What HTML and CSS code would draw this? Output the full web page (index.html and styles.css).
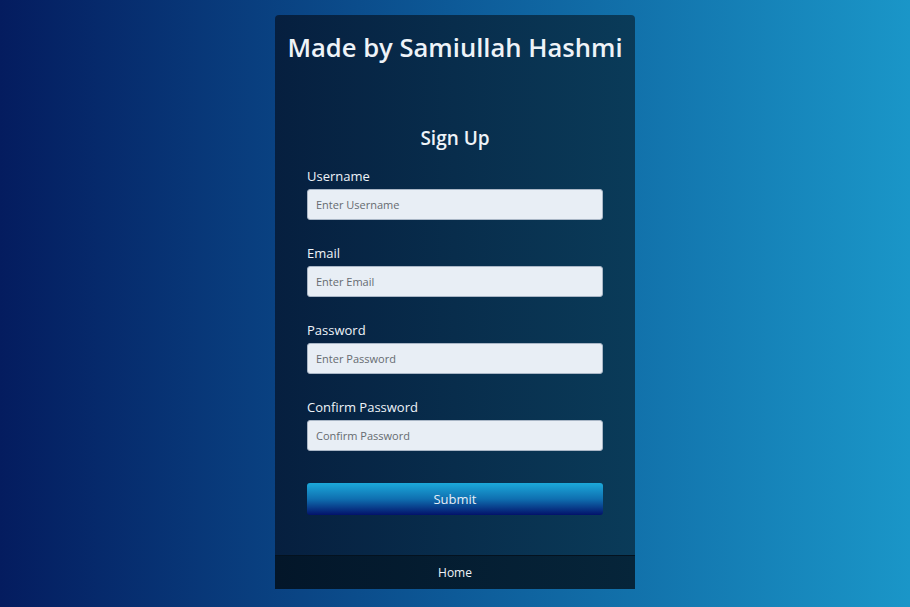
FILE: index.html
```html
<!DOCTYPE html>
<html>
<head>
<meta charset="utf-8">
<link rel="stylesheet" href="styles.css">
</head>
<body>
<div class="page">
  <div class="card">
    <h1 class="title">Made by Samiullah Hashmi</h1>
    <form class="form">
      <h2 class="form-title">Sign Up</h2>
      <div class="field">
        <label class="label">Username</label>
        <input class="input" type="text" placeholder="Enter Username">
      </div>
      <div class="field">
        <label class="label">Email</label>
        <input class="input" type="text" placeholder="Enter Email">
      </div>
      <div class="field">
        <label class="label">Password</label>
        <input class="input" type="password" placeholder="Enter Password">
      </div>
      <div class="field">
        <label class="label">Confirm Password</label>
        <input class="input" type="password" placeholder="Confirm Password">
      </div>
      <button class="submit" type="button">Submit</button>
    </form>
    <div class="footer">Home</div>
  </div>
</div>
</body>
</html>
```
FILE: styles.css
```css
* { box-sizing: border-box; }
html, body { margin: 0; height: 100%; }
body {
  font-family: "Open Sans", "Noto Sans", sans-serif;
  background: linear-gradient(to right, #041c5f 0%, #0d5a98 50%, #1a96c8 100%);
}
.page {
  display: flex;
  justify-content: center;
  padding-top: 15px;
}
.card {
  width: 360px;
  background: linear-gradient(to right, #061f3f, #0a3b59);
  border-radius: 4px 4px 0 0;
  display: flex;
  flex-direction: column;
}
.title {
  margin: 0;
  padding-top: 16px;
  text-align: center;
  color: #eef3f8;
  font-size: 25.6px;
  font-weight: 600;
  line-height: 34px;
}
.form {
  padding: 59px 32px 40px;
  display: flex;
  flex-direction: column;
}
.form-title {
  margin: 0 0 15px;
  text-align: center;
  color: #eef3f8;
  font-size: 19px;
  font-weight: 600;
  line-height: 28px;
}
.field {
  display: flex;
  flex-direction: column;
  margin-bottom: 24px;
}
.label {
  color: #eef3f8;
  font-size: 13px;
  line-height: 18px;
  margin-bottom: 4px;
}
.input {
  height: 31px;
  border: 1px solid #a9b6c6;
  border-radius: 3px;
  background: #e8eef5;
  padding: 0 8px;
  font-family: "Open Sans", sans-serif;
  font-size: 11px;
  color: #222;
}
.input::placeholder { color: #666b70; }
.submit {
  margin-top: 8px;
  height: 32px;
  border: none;
  border-radius: 3px;
  background: linear-gradient(to bottom, #1ca9da 0%, #0f6fb0 50%, #03126a 100%);
  color: #e6eef6;
  font-family: "Open Sans", sans-serif;
  font-size: 13px;
}
.footer {
  height: 34px;
  background: linear-gradient(to right, #031629, #06253a);
  border-top: 1px solid #04121f;
  color: #eef3f8;
  font-size: 12px;
  display: flex;
  align-items: center;
  justify-content: center;
}
```
